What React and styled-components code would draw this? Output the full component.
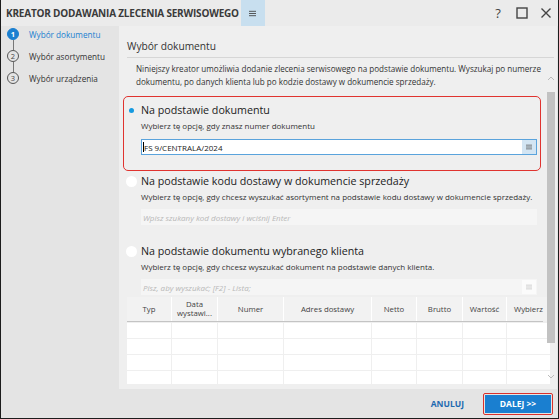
import React from 'react';
import styled, { createGlobalStyle } from 'styled-components';

const FONT = '"Open Sans", "Noto Sans", sans-serif';
const BLUE = '#1a7fd0';

const GlobalStyle = createGlobalStyle`
  html, body {
    margin: 0;
    padding: 0;
    background: #e4e4e4;
    font-family: ${FONT};
    color: #333;
  }
`;

const Window = styled.div`
  width: 559px;
  height: 419px;
  box-sizing: border-box;
  border: 1px solid #1c1c1c;
  border-top: none;
  display: flex;
  flex-direction: column;
  background: #e4e4e4;
  overflow: hidden;
`;

const TitleBar = styled.div`
  height: 26px;
  flex: none;
  display: flex;
  align-items: center;
  background: #ebebeb;
`;

const Title = styled.div`
  padding-left: 5px;
  font-size: 10px;
  font-weight: 700;
  color: #3a3a3a;
  letter-spacing: -0.2px;
  white-space: nowrap;
`;

const MenuButton = styled.div`
  width: 24px;
  height: 26px;
  margin-left: 2px;
  background: #c8dfef;
  display: flex;
  align-items: center;
  justify-content: center;
`;

const WindowControls = styled.div`
  margin-left: auto;
  display: flex;
  align-items: center;
  gap: 12px;
  padding-right: 6px;
  color: #444;
`;

const HelpMark = styled.span`
  font-size: 13px;
  width: 12px;
  text-align: center;
`;

const Body = styled.div`
  flex: 1;
  display: flex;
  min-height: 0;
`;

const Sidebar = styled.div`
  width: 118px;
  flex: none;
  display: flex;
  flex-direction: column;
  gap: 6px;
`;

const Step = styled.div`
  display: flex;
  align-items: center;
  height: 16px;
  padding-left: 6px;
  font-size: 8.2px;
  color: ${(p) => (p.active ? BLUE : '#333')};
  position: relative;
`;

const StepDot = styled.div`
  width: 12px;
  height: 12px;
  box-sizing: border-box;
  border-radius: 50%;
  border: 1px solid ${(p) => (p.active ? BLUE : '#555')};
  background: ${(p) => (p.active ? BLUE : 'transparent')};
  color: ${(p) => (p.active ? '#fff' : '#444')};
  font-size: 7.5px;
  font-weight: ${(p) => (p.active ? 700 : 400)};
  display: flex;
  align-items: center;
  justify-content: center;
  margin-right: 10px;
  flex: none;
`;

const StepLink = styled.div`
  position: absolute;
  left: 11.5px;
  top: -8px;
  width: 1px;
  height: 10px;
  background: #777;
`;

const Main = styled.div`
  flex: 1;
  display: flex;
  flex-direction: column;
  min-width: 0;
`;

const Panel = styled.div`
  height: 363px;
  flex: none;
  background: #efefef;
  margin-right: 1px;
  display: flex;
  flex-direction: column;
`;

const SectionTitle = styled.div`
  margin: 12px 3px 0 8px;
  padding-bottom: 3px;
  border-bottom: 1px solid #d6d6d6;
  font-size: 10.2px;
  line-height: 16px;
  color: #333;
`;

const ScrollArea = styled.div`
  margin-top: 2px;
  height: 324px;
  display: flex;
  overflow: hidden;
`;

const Content = styled.div`
  flex: 1;
  padding-left: 4px;
  min-width: 0;
`;

const Intro = styled.p`
  margin: 2px 0 0 13px;
  font-size: 8.1px;
  line-height: 13px;
  color: #333;
`;

const Options = styled.div`
  margin-top: 8px;
  width: 418px;
`;

const Option = styled.div`
  box-sizing: border-box;
  border: 1px solid ${(p) => (p.selected ? '#e0332f' : 'transparent')};
  border-radius: 5px;
  padding: 5px 3px ${(p) => (p.last ? '1px' : '15px')} 2px;
  margin-top: ${(p) => (p.first ? '0' : '-4px')};
`;

const OptionHead = styled.div`
  display: flex;
  align-items: center;
  height: 16px;
`;

const Radio = styled.div`
  width: 11px;
  height: 11px;
  border-radius: 50%;
  background: ${(p) => (p.checked ? 'transparent' : '#fff')};
  margin-right: 4px;
  display: flex;
  align-items: center;
  justify-content: center;
  &::after {
    content: '';
    display: ${(p) => (p.checked ? 'block' : 'none')};
    width: 5px;
    height: 5px;
    border-radius: 50%;
    background: #159ae0;
  }
`;

const OptionTitle = styled.div`
  font-size: 10.7px;
  color: #222;
`;

const OptionHint = styled.div`
  margin: 2px 0 0 15px;
  font-size: 8px;
  line-height: 12px;
  color: #333;
`;

const Field = styled.div`
  margin: ${(p) => (p.tight ? '6px' : '7px')} 0 0 15px;
  height: 16px;
  box-sizing: border-box;
  display: flex;
  align-items: center;
  background: ${(p) => (p.focused ? '#fff' : '#f5f5f5')};
  border: 1px solid ${(p) => (p.focused ? '#5aa3dc' : '#f5f5f5')};
`;

const FieldText = styled.div`
  flex: 1;
  padding-left: 1px;
  font-size: 8px;
  color: ${(p) => (p.placeholder ? '#b8b8b8' : '#222')};
  font-style: ${(p) => (p.placeholder ? 'italic' : 'normal')};
  white-space: nowrap;
  overflow: hidden;
`;

const Caret = styled.span`
  display: inline-block;
  width: 1px;
  height: 10px;
  background: #000;
  vertical-align: -1px;
`;

const FieldButton = styled.div`
  width: 14px;
  height: 100%;
  display: flex;
  align-items: center;
  justify-content: center;
  background: ${(p) => (p.active ? '#d3e5f3' : '#fbfbfb')};
`;

const Table = styled.div`
  margin-left: 4px;
  width: 416px;
`;

const Row = styled.div`
  display: grid;
  grid-template-columns: 44px 45px 65px 87px 44px 45px 43px 43px;
  gap: 0 1px;
  margin-top: ${(p) => (p.header ? '0' : '1px')};
  background: ${(p) => (p.header ? '#fff' : 'transparent')};
  border-bottom: ${(p) => (p.header ? '1px solid #c4c4c4' : 'none')};
`;

const HeadCell = styled.div`
  height: 24px;
  background: #f2f2f2;
  display: flex;
  align-items: center;
  justify-content: center;
  text-align: center;
  font-size: 7.8px;
  line-height: 9px;
  color: #444;
`;

const Cell = styled.div`
  height: 15px;
  background: #fff;
`;

const Scrollbar = styled.div`
  width: 9px;
  margin-right: 2px;
  display: flex;
  flex-direction: column;
  align-items: center;
`;

const Thumb = styled.div`
  margin-top: 6px;
  width: 8px;
  height: 275px;
  background: #c2c2c2;
`;

const Footer = styled.div`
  flex: 1;
  display: flex;
  align-items: center;
  justify-content: flex-end;
  padding-right: 5px;
  gap: 19px;
`;

const LinkButton = styled.div`
  font-size: 8.5px;
  font-weight: 700;
  color: #1e6ab0;
`;

const PrimaryButton = styled.div`
  width: 70px;
  height: 22px;
  box-sizing: border-box;
  border: 1.5px solid #d9302c;
  border-radius: 2px;
  padding: 1px;
  display: flex;
`;

const PrimaryFace = styled.div`
  flex: 1;
  background: ${BLUE};
  color: #fff;
  font-size: 8.5px;
  font-weight: 700;
  display: flex;
  align-items: center;
  justify-content: center;
`;

const MenuIcon = ({ color = '#555', size = 7 }) => (
  <svg width={size} height={size} viewBox="0 0 8 8">
    <path d="M0 1.5h8M0 4h8M0 6.5h8" stroke={color} strokeWidth="1" />
  </svg>
);

const Chevron = ({ up }) => (
  <svg width="8" height="5" viewBox="0 0 8 5">
    <path d={up ? 'M1 4l3-3 3 3' : 'M1 1l3 3 3-3'} fill="none" stroke="#bbb" strokeWidth="1" />
  </svg>
);

const steps = ['Wybór dokumentu', 'Wybór asortymentu', 'Wybór urządzenia'];
const columns = ['Typ', 'Data wystawi...', 'Numer', 'Adres dostawy', 'Netto', 'Brutto', 'Wartość', 'Wybierz'];

const App = () => (
  <>
    <GlobalStyle />
    <Window>
      <TitleBar>
        <Title>KREATOR DODAWANIA ZLECENIA SERWISOWEGO</Title>
        <MenuButton><MenuIcon color="#444" /></MenuButton>
        <WindowControls>
          <HelpMark>?</HelpMark>
          <svg width="12" height="12" viewBox="0 0 12 12">
            <rect x="1" y="1" width="10" height="10" fill="none" stroke="#444" strokeWidth="1.4" />
          </svg>
          <svg width="12" height="12" viewBox="0 0 12 12">
            <path d="M1.5 1.5l9 9M10.5 1.5l-9 9" stroke="#444" strokeWidth="1.4" />
          </svg>
        </WindowControls>
      </TitleBar>
      <Body>
        <Sidebar>
          {steps.map((step, i) => (
            <Step key={step} active={i === 0}>
              {i > 0 && <StepLink />}
              <StepDot active={i === 0}>{i + 1}</StepDot>
              {step}
            </Step>
          ))}
        </Sidebar>
        <Main>
          <Panel>
            <SectionTitle>Wybór dokumentu</SectionTitle>
            <ScrollArea>
              <Content>
                <Intro>
                  Niniejszy kreator umożliwia dodanie zlecenia serwisowego na podstawie dokumentu. Wyszukaj po numerze
                  dokumentu, po danych klienta lub po kodzie dostawy w dokumencie sprzedaży.
                </Intro>
                <Options>
                  <Option selected first>
                    <OptionHead>
                      <Radio checked />
                      <OptionTitle>Na podstawie dokumentu</OptionTitle>
                    </OptionHead>
                    <OptionHint>Wybierz tę opcję, gdy znasz numer dokumentu</OptionHint>
                    <Field focused>
                      <FieldText><Caret />FS 9/CENTRALA/2024</FieldText>
                      <FieldButton active><MenuIcon color="#555" size={6} /></FieldButton>
                    </Field>
                  </Option>
                  <Option>
                    <OptionHead>
                      <Radio />
                      <OptionTitle>Na podstawie kodu dostawy w dokumencie sprzedaży</OptionTitle>
                    </OptionHead>
                    <OptionHint>Wybierz tę opcję, gdy chcesz wyszukać asortyment na podstawie kodu dostawy w dokumencie sprzedaży.</OptionHint>
                    <Field tight>
                      <FieldText placeholder>Wpisz szukany kod dostawy i wciśnij Enter</FieldText>
                    </Field>
                  </Option>
                  <Option last>
                    <OptionHead>
                      <Radio />
                      <OptionTitle>Na podstawie dokumentu wybranego klienta</OptionTitle>
                    </OptionHead>
                    <OptionHint>Wybierz tę opcję, gdy chcesz wyszukać dokument na podstawie danych klienta.</OptionHint>
                    <Field tight>
                      <FieldText placeholder>Pisz, aby wyszukać; [F2] - Lista;</FieldText>
                      <FieldButton><MenuIcon color="#c4c4c4" size={6} /></FieldButton>
                    </Field>
                  </Option>
                </Options>
                <Table>
                  <Row header>
                    {columns.map((c) => <HeadCell key={c}>{c === 'Data wystawi...' ? <span>Data<br />wystawi...</span> : c}</HeadCell>)}
                  </Row>
                  {[0, 1, 2, 3].map((r) => (
                    <Row key={r}>
                      {columns.map((c) => <Cell key={c} />)}
                    </Row>
                  ))}
                </Table>
              </Content>
              <Scrollbar>
                <div style={{ marginTop: 4 }}><Chevron up /></div>
                <Thumb />
                <div style={{ marginTop: 19 }}><Chevron /></div>
              </Scrollbar>
            </ScrollArea>
          </Panel>
          <Footer>
            <LinkButton>ANULUJ</LinkButton>
            <PrimaryButton><PrimaryFace>DALEJ &gt;&gt;</PrimaryFace></PrimaryButton>
          </Footer>
        </Main>
      </Body>
    </Window>
  </>
);

export default App;
